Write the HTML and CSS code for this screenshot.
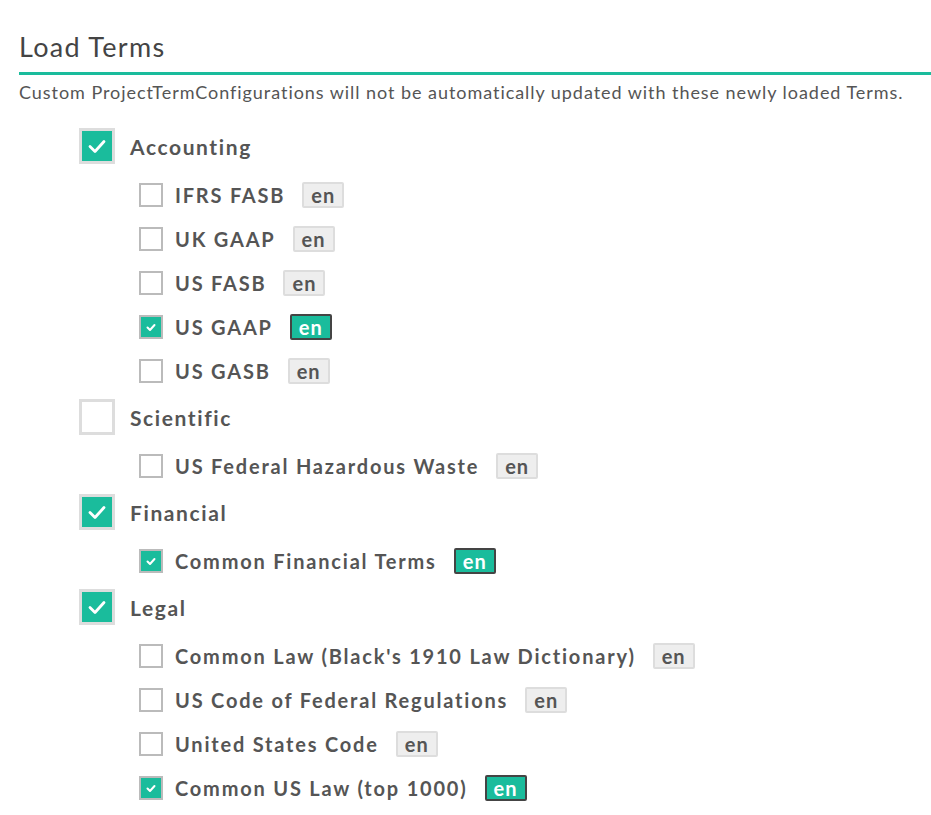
FILE: index.html
```html
<!DOCTYPE html>
<html lang="en">
<head>
<meta charset="utf-8">
<title>Load Terms</title>
<link rel="stylesheet" href="styles.css">
</head>
<body>
<div class="page">
  <h1 class="title">Load Terms</h1>
  <p class="desc">Custom ProjectTermConfigurations will not be automatically updated with these newly loaded Terms.</p>
  <ul class="tree">
    <li class="cat">
      <div class="cat-row"><span class="cbox big on"><svg viewBox="0 0 30 30"><path d="M8 15.5l5 5 9-10" /></svg></span><span class="cat-label">Accounting</span></div>
      <ul class="items">
        <li class="item"><span class="cbox small"></span><span class="label">IFRS FASB</span><span class="badge">en</span></li>
        <li class="item"><span class="cbox small"></span><span class="label">UK GAAP</span><span class="badge">en</span></li>
        <li class="item"><span class="cbox small"></span><span class="label">US FASB</span><span class="badge">en</span></li>
        <li class="item"><span class="cbox small on"><svg viewBox="0 0 20 20"><path d="M6.5 10.5l2.5 2.5 4.5-5" /></svg></span><span class="label">US GAAP</span><span class="badge on">en</span></li>
        <li class="item"><span class="cbox small"></span><span class="label">US GASB</span><span class="badge">en</span></li>
      </ul>
    </li>
    <li class="cat">
      <div class="cat-row"><span class="cbox big"></span><span class="cat-label">Scientific</span></div>
      <ul class="items">
        <li class="item"><span class="cbox small"></span><span class="label">US Federal Hazardous Waste</span><span class="badge">en</span></li>
      </ul>
    </li>
    <li class="cat">
      <div class="cat-row"><span class="cbox big on"><svg viewBox="0 0 30 30"><path d="M8 15.5l5 5 9-10" /></svg></span><span class="cat-label">Financial</span></div>
      <ul class="items">
        <li class="item"><span class="cbox small on"><svg viewBox="0 0 20 20"><path d="M6.5 10.5l2.5 2.5 4.5-5" /></svg></span><span class="label">Common Financial Terms</span><span class="badge on">en</span></li>
      </ul>
    </li>
    <li class="cat">
      <div class="cat-row"><span class="cbox big on"><svg viewBox="0 0 30 30"><path d="M8 15.5l5 5 9-10" /></svg></span><span class="cat-label">Legal</span></div>
      <ul class="items">
        <li class="item"><span class="cbox small"></span><span class="label">Common Law (Black's 1910 Law Dictionary)</span><span class="badge">en</span></li>
        <li class="item"><span class="cbox small"></span><span class="label">US Code of Federal Regulations</span><span class="badge">en</span></li>
        <li class="item"><span class="cbox small"></span><span class="label">United States Code</span><span class="badge">en</span></li>
        <li class="item"><span class="cbox small on"><svg viewBox="0 0 20 20"><path d="M6.5 10.5l2.5 2.5 4.5-5" /></svg></span><span class="label">Common US Law (top 1000)</span><span class="badge on">en</span></li>
      </ul>
    </li>
  </ul>
</div>
</body>
</html>
```

FILE: styles.css
```css
html, body {
  margin: 0;
  padding: 0;
  background: #ffffff;
}

.page {
  padding: 30px 0 0 19px;
  font-family: Lato, "Open Sans", sans-serif;
  color: #555555;
}

.title {
  margin: 0;
  padding-bottom: 8px;
  font-family: Lato, sans-serif;
  font-weight: 400;
  font-size: 27px;
  line-height: 34px;
  letter-spacing: 1.3px;
  color: #444444;
  border-bottom: 3px solid #1abc9c;
}

.desc {
  margin: 5px 0 0 0;
  font-size: 18px;
  line-height: 24px;
  letter-spacing: 0.95px;
  color: #555555;
}

.tree {
  list-style: none;
  margin: 24px 0 0 60px;
  padding: 0;
  display: flex;
  flex-direction: column;
  gap: 15px;
}

.cat-row {
  display: flex;
  align-items: center;
  gap: 15px;
  height: 36px;
}

.cat-label {
  font-size: 21px;
  font-weight: 700;
  letter-spacing: 1.6px;
}

.items {
  list-style: none;
  margin: 18px 0 0 60px;
  padding: 0;
  display: flex;
  flex-direction: column;
  gap: 18px;
}

.item {
  display: flex;
  align-items: center;
  height: 26px;
}

.cbox {
  box-sizing: border-box;
  display: inline-flex;
  align-items: center;
  justify-content: center;
  background: #ffffff;
  flex: none;
}

.cbox.big {
  width: 36px;
  height: 36px;
  border: 3px solid #dddddd;
}

.cbox.small {
  width: 24px;
  height: 24px;
  border: 2px solid #bbbbbb;
  margin-right: 12px;
}

.cbox.on {
  background: #1abc9c;
}

.cbox svg {
  width: 100%;
  height: 100%;
}

.cbox path {
  fill: none;
  stroke: #ffffff;
  stroke-width: 2.8;
  stroke-linecap: round;
  stroke-linejoin: round;
}

.cbox.small path {
  stroke-width: 2;
}

.label {
  font-size: 20px;
  font-weight: 700;
  letter-spacing: 1.8px;
}

.badge {
  box-sizing: border-box;
  margin-left: 17px;
  height: 26px;
  min-width: 42px;
  padding: 0 6px;
  display: inline-flex;
  align-items: center;
  justify-content: center;
  background: #eeeeee;
  border: 2px solid #dddddd;
  border-radius: 2px;
  font-size: 20px;
  line-height: 22px;
  font-weight: 700;
  letter-spacing: 1px;
  color: #555555;
}

.badge.on {
  background: #1abc9c;
  border-color: #444444;
  color: #ffffff;
}
```
